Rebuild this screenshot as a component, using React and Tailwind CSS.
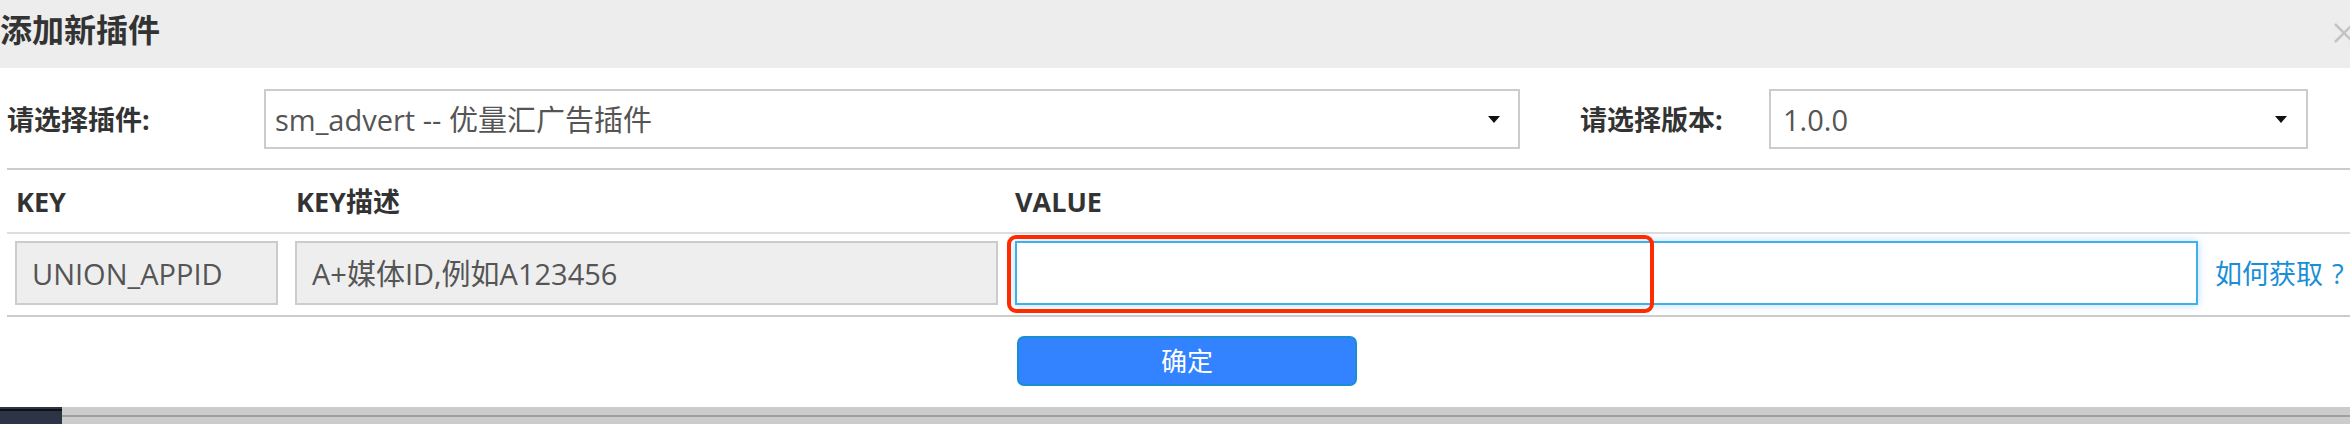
export default function App() {
  return (
    <div className="w-[2350px] h-[424px] overflow-hidden bg-white flex flex-col font-['Open_Sans','Noto_Sans_CJK_SC',sans-serif]">
      {/* header */}
      <div className="h-[68px] shrink-0 bg-[#ededed] flex items-center justify-between">
        <div className="text-[32px] font-bold text-[#333] leading-none -mt-[8px]">添加新插件</div>
        <svg width="22" height="22" viewBox="0 0 22 22" className="mr-[-5px] -mt-[2px]">
          <path d="M2 2 L20 20 M20 2 L2 20" stroke="#c4c4c4" strokeWidth="2.6" fill="none" />
        </svg>
      </div>

      {/* select row */}
      <div className="ml-[7px] h-[102px] shrink-0 flex items-center border-b-2 border-[#ccc] pt-[2px]">
        <div className="w-[257px] text-[27px] font-bold text-[#333] leading-none">请选择插件:</div>
        <div className="w-[1256px] h-[60px] border-2 border-[#ccc] flex items-center justify-between pl-[9px] pr-[18px]">
          <span className="text-[29px] text-[#555] leading-none">sm_advert -- 优量汇广告插件</span>
          <svg width="12" height="7" viewBox="0 0 12 7"><path d="M0 0 L12 0 L6 7 Z" fill="#111" /></svg>
        </div>
        <div className="ml-[60px] w-[189px] text-[27px] font-bold text-[#333] leading-none">请选择版本:</div>
        <div className="w-[539px] h-[60px] border-2 border-[#ccc] flex items-center justify-between pl-[12px] pr-[19px]">
          <span className="text-[29px] text-[#555] leading-none">1.0.0</span>
          <svg width="12" height="7" viewBox="0 0 12 7"><path d="M0 0 L12 0 L6 7 Z" fill="#111" /></svg>
        </div>
      </div>

      {/* table header */}
      <div className="ml-[7px] h-[64px] shrink-0 flex items-center border-b-2 border-[#ddd] pl-[9px] text-[27px] font-bold text-[#333] leading-none">
        <div className="w-[280px]">KEY</div>
        <div className="w-[719px]">KEY描述</div>
        <div>VALUE</div>
      </div>

      {/* table row */}
      <div className="ml-[7px] h-[83px] shrink-0 flex items-start border-b-2 border-[#ccc] pl-[8px] pt-[7px]">
        <div className="w-[263px] h-[64px] bg-[#eee] border-2 border-[#ccc] flex items-center pl-[15px] text-[29px] text-[#555] leading-none">UNION_APPID</div>
        <div className="ml-[17px] w-[703px] h-[64px] bg-[#eee] border-2 border-[#ccc] flex items-center pl-[15px] text-[29px] text-[#555] leading-none">A+媒体ID,例如A123456</div>
        <div className="ml-[17px] relative">
          <div className="w-[1183px] h-[64px] bg-white border-2 border-[#3cb0ec] shadow-[0_0_8px_rgba(102,175,233,0.45)]"></div>
          <div className="absolute left-[-8px] top-[-6px] w-[647px] h-[78px] border-[4px] border-[#ff2a00] rounded-[9px]"></div>
        </div>
        <div className="ml-[17px] h-[64px] flex items-center text-[27px] text-[#1a8fd6] leading-none whitespace-nowrap">
          如何获取<span className="ml-[9px]">?</span>
        </div>
      </div>

      {/* button row */}
      <div className="h-[90px] shrink-0 pl-[1017px] pt-[19px]">
        <button className="w-[340px] h-[50px] bg-[#3382ff] border-2 border-[#1a8fd0] rounded-[7px] text-white text-[26px] leading-none flex items-center justify-center">确定</button>
      </div>

      {/* bottom bar */}
      <div className="h-[17px] shrink-0 flex">
        <div className="w-[62px] flex flex-col">
          <div className="h-[2px] bg-[#2d3446]"></div>
          <div className="h-[2px] bg-[#111]"></div>
          <div className="flex-1 bg-[#2d3446]"></div>
        </div>
        <div className="flex-1 flex flex-col">
          <div className="h-[8px] bg-[#ccc]"></div>
          <div className="h-[2px] bg-[#9f9f9f]"></div>
          <div className="flex-1 bg-[#ccc]"></div>
        </div>
      </div>
    </div>
  );
}
